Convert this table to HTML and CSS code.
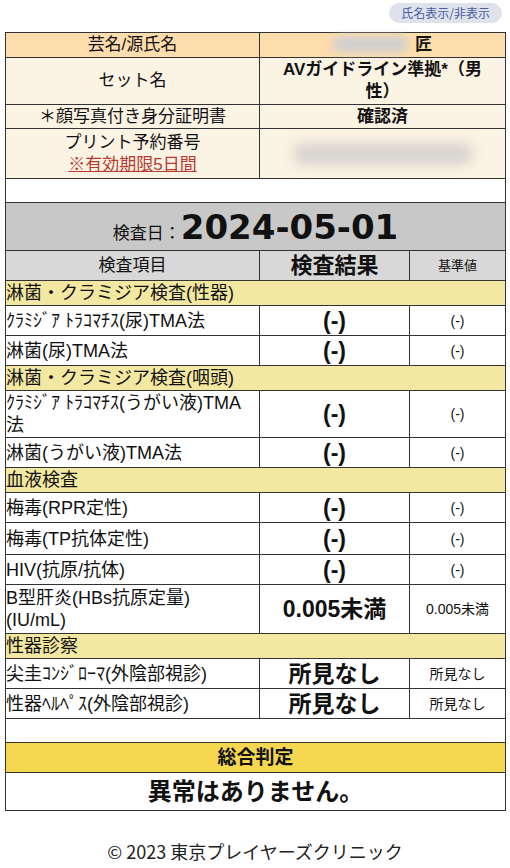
FILE: index.html
```html
<!DOCTYPE html>
<html lang="ja">
<head>
<meta charset="utf-8">
<title>検査結果</title>
<link rel="stylesheet" href="styles.css">
</head>
<body>
<div class="page">
  <div class="toolbar">
    <span class="toggle">氏名表示/非表示</span>
  </div>
  <table class="report">
    <colgroup>
      <col class="c1"><col class="c2"><col class="c3">
    </colgroup>
    <tbody>
      <tr class="r-orange">
        <td>芸名/源氏名</td>
        <td colspan="2" class="bold"><span class="blur-name"></span>匠</td>
      </tr>
      <tr class="r-cream r-tall">
        <td>セット名</td>
        <td colspan="2" class="bold">AVガイドライン準拠*（男<br>性）</td>
      </tr>
      <tr class="r-cream r-std">
        <td>＊顔写真付き身分証明書</td>
        <td colspan="2" class="bold">確認済</td>
      </tr>
      <tr class="r-cream r-print">
        <td>プリント予約番号<br><span class="limit">※有効期限5日間</span></td>
        <td colspan="2"><span class="blur-num"></span></td>
      </tr>
      <tr class="r-empty">
        <td colspan="3"></td>
      </tr>
      <tr class="r-date">
        <td colspan="3"><span class="date-label">検査日：</span><span class="date">2024-05-01</span></td>
      </tr>
      <tr class="r-colhead">
        <td>検査項目</td>
        <td class="colhead-res">検査結果</td>
        <td class="colhead-ref">基準値</td>
      </tr>
      <tr class="cat"><td colspan="3">淋菌・クラミジア検査(性器)</td></tr>
      <tr class="item">
        <td class="label">ｸﾗﾐｼﾞｱ ﾄﾗｺﾏﾁｽ(尿)TMA法</td>
        <td class="res">(-)</td>
        <td class="ref">(-)</td>
      </tr>
      <tr class="item">
        <td class="label">淋菌(尿)TMA法</td>
        <td class="res">(-)</td>
        <td class="ref">(-)</td>
      </tr>
      <tr class="cat"><td colspan="3">淋菌・クラミジア検査(咽頭)</td></tr>
      <tr class="item item-2">
        <td class="label">ｸﾗﾐｼﾞｱ ﾄﾗｺﾏﾁｽ(うがい液)TMA<br>法</td>
        <td class="res">(-)</td>
        <td class="ref">(-)</td>
      </tr>
      <tr class="item">
        <td class="label">淋菌(うがい液)TMA法</td>
        <td class="res">(-)</td>
        <td class="ref">(-)</td>
      </tr>
      <tr class="cat"><td colspan="3">血液検査</td></tr>
      <tr class="item">
        <td class="label">梅毒(RPR定性)</td>
        <td class="res">(-)</td>
        <td class="ref">(-)</td>
      </tr>
      <tr class="item item-mid">
        <td class="label">梅毒(TP抗体定性)</td>
        <td class="res">(-)</td>
        <td class="ref">(-)</td>
      </tr>
      <tr class="item">
        <td class="label">HIV(抗原/抗体)</td>
        <td class="res">(-)</td>
        <td class="ref">(-)</td>
      </tr>
      <tr class="item item-3">
        <td class="label">B型肝炎(HBs抗原定量)<br>(IU/mL)</td>
        <td class="res">0.005未満</td>
        <td class="ref">0.005未満</td>
      </tr>
      <tr class="cat"><td colspan="3">性器診察</td></tr>
      <tr class="item">
        <td class="label">尖圭ｺﾝｼﾞﾛｰﾏ(外陰部視診)</td>
        <td class="res">所見なし</td>
        <td class="ref">所見なし</td>
      </tr>
      <tr class="item">
        <td class="label">性器ﾍﾙﾍﾟｽ(外陰部視診)</td>
        <td class="res">所見なし</td>
        <td class="ref">所見なし</td>
      </tr>
      <tr class="r-empty">
        <td colspan="3"></td>
      </tr>
      <tr class="r-total">
        <td colspan="3">総合判定</td>
      </tr>
      <tr class="r-verdict">
        <td colspan="3">異常はありません。</td>
      </tr>
    </tbody>
  </table>
  <footer class="footer">© 2023 東京プレイヤーズクリニック</footer>
</div>
</body>
</html>
```

FILE: styles.css
```css
html, body {
  margin: 0;
  padding: 0;
  background: #ffffff;
}

body {
  font-family: "Liberation Sans", "Noto Sans CJK JP", sans-serif;
  color: #111111;
}

.page {
  padding: 0 5px;
}

.toolbar {
  display: flex;
  justify-content: flex-end;
  align-items: flex-start;
  height: 32px;
  padding: 3px 3px 0 0;
  box-sizing: border-box;
}

.toggle {
  display: inline-block;
  height: 20px;
  line-height: 20px;
  padding: 0 12px;
  border-radius: 10px;
  background: #dfe2eb;
  color: #4a5ca6;
  font-family: "Noto Sans CJK JP", sans-serif;
  font-size: 12px;
}

.report {
  width: 500px;
  border-collapse: collapse;
  table-layout: fixed;
}

.c1 { width: 254px; }
.c2 { width: 150px; }
.c3 { width: 96px; }

.report td {
  border: 1px solid #333333;
  padding: 0;
  text-align: center;
  vertical-align: middle;
  font-size: 17px;
  line-height: 22px;
}

.bold {
  font-weight: bold;
}

.r-orange td {
  background: #fddcae;
  height: 24px;
}

.r-cream td {
  background: #fbf3e3;
}

.r-std td {
  height: 23px;
}

.r-tall td {
  height: 46px;
}

.r-print td {
  height: 49px;
}

.blur-name {
  display: inline-block;
  width: 74px;
  height: 16px;
  margin-right: 8px;
  vertical-align: -2px;
  background: #cfcfcf;
  border-radius: 6px;
  filter: blur(4px);
}

.blur-num {
  display: block;
  width: 180px;
  height: 22px;
  margin: 0 auto;
  background: #d8d5cf;
  border-radius: 10px;
  filter: blur(6px);
}

.limit {
  color: #b83a30;
  text-decoration: underline;
}

.r-empty td {
  height: 23px;
  background: #ffffff;
}

.r-date td {
  height: 47px;
  background: #c8c8c8;
}

.date-label {
  font-size: 17px;
}

.date {
  font-family: "DejaVu Sans", sans-serif;
  font-weight: bold;
  font-size: 34px;
  line-height: 40px;
}

.r-colhead td {
  height: 29px;
  background: #d8d8d8;
}

.colhead-res {
  font-weight: bold;
  font-size: 22px !important;
}

.colhead-ref {
  font-size: 13px !important;
}

.cat td {
  height: 24px;
  background: #f3e8a2;
  text-align: left;
  font-size: 18px;
}

.item td {
  height: 29px;
  background: #ffffff;
}

.item-mid td {
  height: 31px;
}

.item-2 td {
  height: 46px;
}

.item-3 td {
  height: 48px;
}

.item td.label {
  text-align: left;
  font-size: 18px;
}

.item td.res {
  font-weight: bold;
  font-size: 23px;
}

.item td.ref {
  font-size: 14px;
}

.r-total td {
  height: 29px;
  background: #f5d84f;
  font-weight: bold;
  font-size: 19px;
}

.r-verdict td {
  height: 37px;
  background: #ffffff;
  font-weight: bold;
  font-size: 24px;
}

.footer {
  margin-top: 27px;
  text-align: center;
  font-family: "Noto Sans CJK JP", sans-serif;
  font-size: 18px;
  color: #222222;
}
```
